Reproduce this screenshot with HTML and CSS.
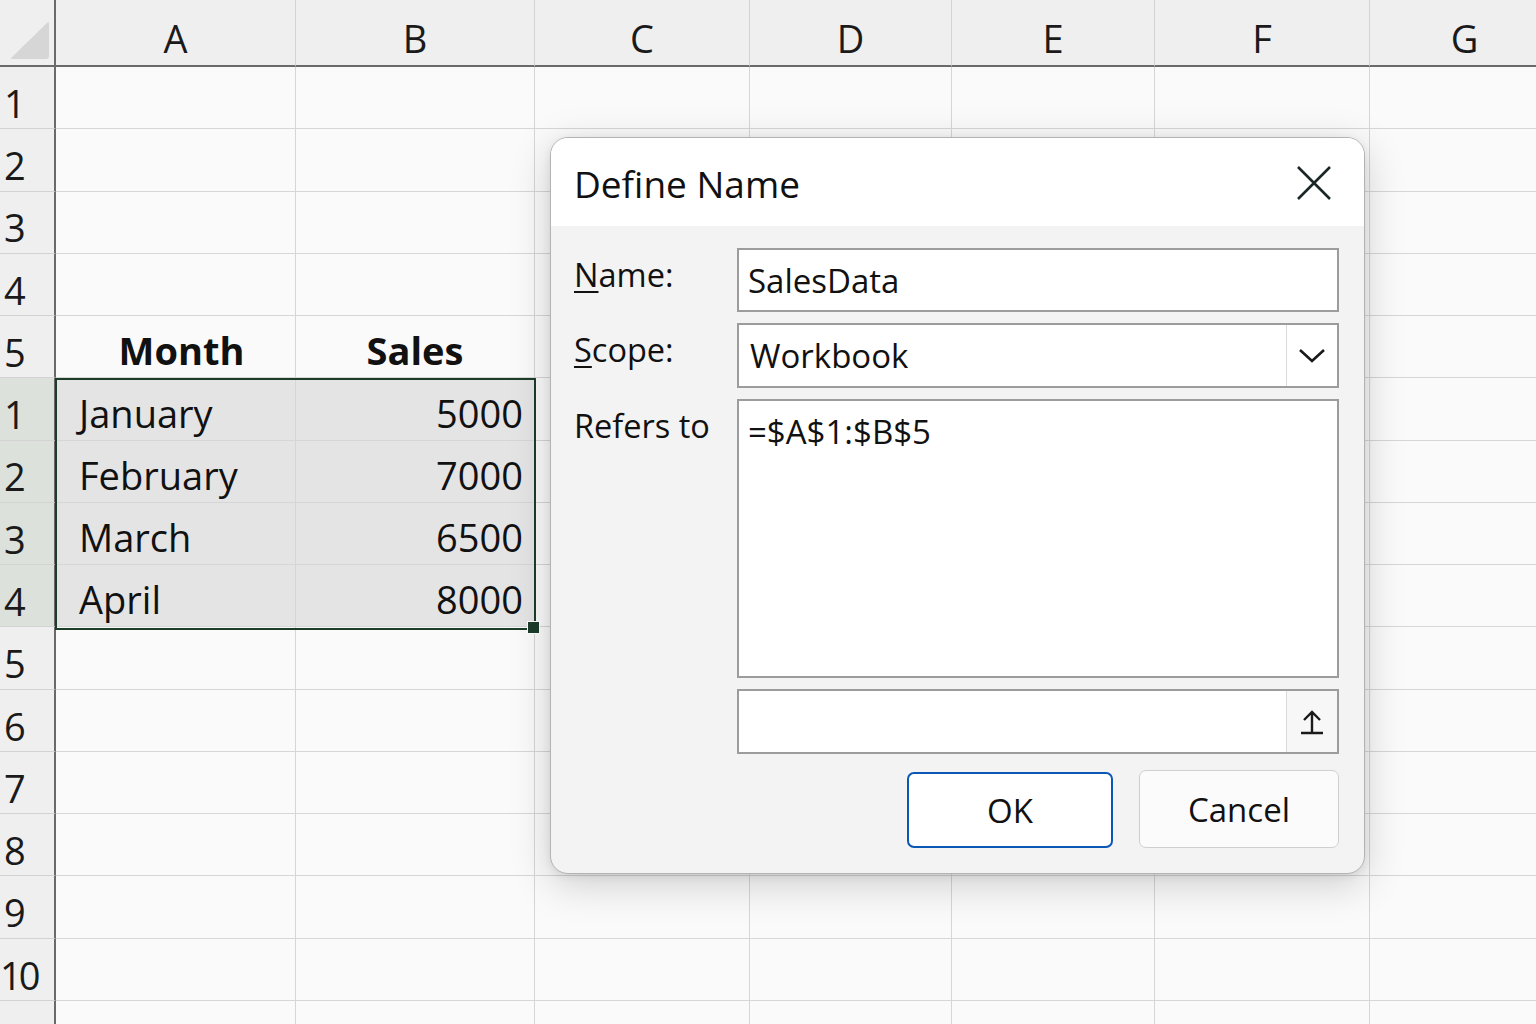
FILE: index.html
```html
<!DOCTYPE html>
<html lang="en">
<head>
    <meta charset="UTF-8">
    <meta name="viewport" content="width=device-width, initial-scale=1.0">
    <title>Define Name</title>
    <link rel="stylesheet" href="styles.css">
</head>
<body>
    <div class="sheet">
        <div class="row head">
            <div class="corner"><span class="tri"></span></div>
            <div class="col">A</div>
            <div class="col">B</div>
            <div class="col">C</div>
            <div class="col">D</div>
            <div class="col">E</div>
            <div class="col">F</div>
            <div class="col">G</div>
        </div>
        <div class="row"><div class="rh">1</div><div class="c"></div><div class="c"></div><div class="c"></div><div class="c"></div><div class="c"></div><div class="c"></div><div class="c"></div></div>
        <div class="row"><div class="rh">2</div><div class="c"></div><div class="c"></div><div class="c"></div><div class="c"></div><div class="c"></div><div class="c"></div><div class="c"></div></div>
        <div class="row"><div class="rh">3</div><div class="c"></div><div class="c"></div><div class="c"></div><div class="c"></div><div class="c"></div><div class="c"></div><div class="c"></div></div>
        <div class="row"><div class="rh">4</div><div class="c"></div><div class="c"></div><div class="c"></div><div class="c"></div><div class="c"></div><div class="c"></div><div class="c"></div></div>
        <div class="row"><div class="rh">5</div><div class="c bold center month">Month</div><div class="c bold center">Sales</div><div class="c"></div><div class="c"></div><div class="c"></div><div class="c"></div><div class="c"></div></div>
        <div class="row"><div class="rh sel">1</div><div class="c sel text">January</div><div class="c sel num">5000</div><div class="c"></div><div class="c"></div><div class="c"></div><div class="c"></div><div class="c"></div></div>
        <div class="row"><div class="rh sel">2</div><div class="c sel text">February</div><div class="c sel num">7000</div><div class="c"></div><div class="c"></div><div class="c"></div><div class="c"></div><div class="c"></div></div>
        <div class="row"><div class="rh sel">3</div><div class="c sel text">March</div><div class="c sel num">6500</div><div class="c"></div><div class="c"></div><div class="c"></div><div class="c"></div><div class="c"></div></div>
        <div class="row"><div class="rh sel">4</div><div class="c sel text">April</div><div class="c sel num">8000</div><div class="c"></div><div class="c"></div><div class="c"></div><div class="c"></div><div class="c"></div></div>
        <div class="row"><div class="rh">5</div><div class="c"></div><div class="c"></div><div class="c"></div><div class="c"></div><div class="c"></div><div class="c"></div><div class="c"></div></div>
        <div class="row"><div class="rh">6</div><div class="c"></div><div class="c"></div><div class="c"></div><div class="c"></div><div class="c"></div><div class="c"></div><div class="c"></div></div>
        <div class="row"><div class="rh">7</div><div class="c"></div><div class="c"></div><div class="c"></div><div class="c"></div><div class="c"></div><div class="c"></div><div class="c"></div></div>
        <div class="row"><div class="rh">8</div><div class="c"></div><div class="c"></div><div class="c"></div><div class="c"></div><div class="c"></div><div class="c"></div><div class="c"></div></div>
        <div class="row"><div class="rh">9</div><div class="c"></div><div class="c"></div><div class="c"></div><div class="c"></div><div class="c"></div><div class="c"></div><div class="c"></div></div>
        <div class="row"><div class="rh wide">10</div><div class="c"></div><div class="c"></div><div class="c"></div><div class="c"></div><div class="c"></div><div class="c"></div><div class="c"></div></div>
        <div class="row"><div class="rh wide">11</div><div class="c"></div><div class="c"></div><div class="c"></div><div class="c"></div><div class="c"></div><div class="c"></div><div class="c"></div></div>

        <!-- selection outline over A6:B9 -->
        <div class="selection"><span class="handle"></span></div>
    </div>

    <div class="dialog">
        <div class="dialog-title">
            <h1>Define Name</h1>
            <button class="close" type="button" aria-label="Close">
                <svg width="36" height="36" viewBox="0 0 36 36"><path d="M2 2 L34 34 M34 2 L2 34" stroke="#1b2626" stroke-width="2.6" fill="none"/></svg>
            </button>
        </div>
        <div class="dialog-body">
            <div class="field">
                <label><u>N</u>ame:</label>
                <div class="box">SalesData</div>
            </div>
            <div class="field">
                <label><u>S</u>cope:</label>
                <div class="box split">
                    <span class="value">Workbook</span>
                    <span class="side">
                        <svg width="28" height="16" viewBox="0 0 28 16"><path d="M2 2 L14 13 L26 2" stroke="#1a1a1a" stroke-width="2.6" fill="none"/></svg>
                    </span>
                </div>
            </div>
            <div class="field">
                <label>Refers to</label>
                <div class="box area">=$A$1:$B$5</div>
            </div>
            <div class="field">
                <label></label>
                <div class="box split">
                    <span class="value"></span>
                    <span class="side light">
                        <svg width="26" height="26" viewBox="0 0 26 26"><path d="M13 23 V3 M5 11 L13 3 L21 11 M2 24 H24" stroke="#1a1a1a" stroke-width="2.4" fill="none"/></svg>
                    </span>
                </div>
            </div>
            <div class="buttons">
                <button type="button" class="btn primary">OK</button>
                <button type="button" class="btn">Cancel</button>
            </div>
        </div>
    </div>
</body>
</html>
```

FILE: styles.css
```css
* {
    margin: 0;
    padding: 0;
    box-sizing: border-box;
}

body {
    font-family: "Open Sans", "Noto Sans", sans-serif;
    background: #fafafa;
    color: #111;
    overflow: hidden;
    height: 1024px;
}

/* spreadsheet grid */
.sheet {
    position: relative;
}

.row {
    display: grid;
    grid-template-columns: 56px 240px 239px 215px 202px 203px 215px 190px;
    height: 62.27px;
}

.row.head {
    height: 67px;
    background: #efefef;
}

.corner {
    border-right: 2px solid #6a6a6a;
    border-bottom: 2px solid #6a6a6a;
    padding: 21px 5px 6px 10px;
}

.tri {
    display: block;
    width: 100%;
    height: 100%;
    background: #d6d6d6;
    clip-path: polygon(100% 0, 100% 100%, 0 100%);
    border-radius: 3px;
}

.col {
    border-right: 1px solid #d3d3d3;
    border-bottom: 2px solid #6a6a6a;
    display: flex;
    justify-content: center;
    align-items: flex-end;
    padding-bottom: 1px;
    font-size: 38px;
    color: #1a1a1a;
}

.rh {
    background: #efefef;
    border-right: 2px solid #6a6a6a;
    border-bottom: 1px solid #d3d3d3;
    display: flex;
    align-items: flex-end;
    padding-left: 4px;
    font-size: 38px;
    line-height: 1.3;
    color: #1a1a1a;
    letter-spacing: -1px;
}

.rh.wide {
    padding-left: 0;
    letter-spacing: -3px;
}

.rh.sel {
    background: #dce1dc;
}

.c {
    border-right: 1px solid #d6d6d6;
    border-bottom: 1px solid #d6d6d6;
    display: flex;
    align-items: flex-end;
    padding-bottom: 1px;
    font-size: 38px;
    color: #111;
}

.c.sel {
    background: #e4e4e4;
}

.c.bold {
    font-weight: 700;
}

.c.center {
    justify-content: center;
}

.c.month {
    padding-left: 12px;
}

.c.text {
    padding-left: 23px;
}

.c.num {
    justify-content: flex-end;
    padding-right: 11px;
}

.selection {
    position: absolute;
    left: 55px;
    top: 378px;
    width: 481px;
    height: 252px;
    border: 2px solid #1d3d2b;
}

.handle {
    position: absolute;
    right: -6px;
    bottom: -6px;
    width: 13px;
    height: 13px;
    background: #1d3d2b;
    border: 1px solid #fff;
}

/* Define Name dialog */
.dialog {
    position: absolute;
    left: 550px;
    top: 137px;
    width: 815px;
    height: 737px;
    background: #f3f3f3;
    border: 1px solid #b3b3b3;
    border-radius: 18px;
    box-shadow: 0 10px 40px rgba(0,0,0,0.18), 0 2px 8px rgba(0,0,0,0.08);
    overflow: hidden;
}

.dialog-title {
    height: 88px;
    background: #fff;
    display: flex;
    align-items: center;
    justify-content: space-between;
    padding: 0 32px 0 23px;
}

.dialog-title h1 {
    font-size: 37px;
    font-weight: 400;
    color: #111;
    padding-top: 3px;
}

.close {
    background: none;
    border: none;
    display: flex;
    padding-top: 2px;
}

.dialog-body {
    padding: 22px 25px 0 23px;
    display: flex;
    flex-direction: column;
    gap: 11px;
}

.field {
    display: flex;
}

.field label {
    width: 163px;
    font-size: 32.5px;
    color: #111;
    padding-top: 4px;
}

.field label u {
    text-decoration-thickness: 2px;
    text-underline-offset: 4px;
}

.box {
    flex: 1;
    height: 64px;
    background: #fff;
    border: 2px solid #9c9c9c;
    font-size: 33px;
    color: #111;
    padding-left: 9px;
    display: flex;
    align-items: center;
}

.box.split {
    padding-left: 0;
    height: 65px;
}

.box.split .value {
    flex: 1;
    padding-left: 11px;
}

.side {
    width: 51px;
    height: 100%;
    border-left: 1px solid #dadada;
    display: flex;
    align-items: center;
    justify-content: center;
}

.side.light {
    background: #f7f7f7;
}

.box.area {
    height: 279px;
    align-items: flex-start;
    padding-top: 8px;
}

.buttons {
    display: flex;
    justify-content: flex-end;
    align-items: flex-end;
    gap: 26px;
    margin-top: 5px;
}

.btn {
    font-family: inherit;
    font-size: 33px;
    color: #111;
    background: #fbfbfb;
    border: 1px solid #cfcfcf;
    border-radius: 7px;
    width: 200px;
    height: 78px;
}

.btn.primary {
    width: 206px;
    height: 76px;
    background: #fff;
    border: 2px solid #0b57b8;
}
```
